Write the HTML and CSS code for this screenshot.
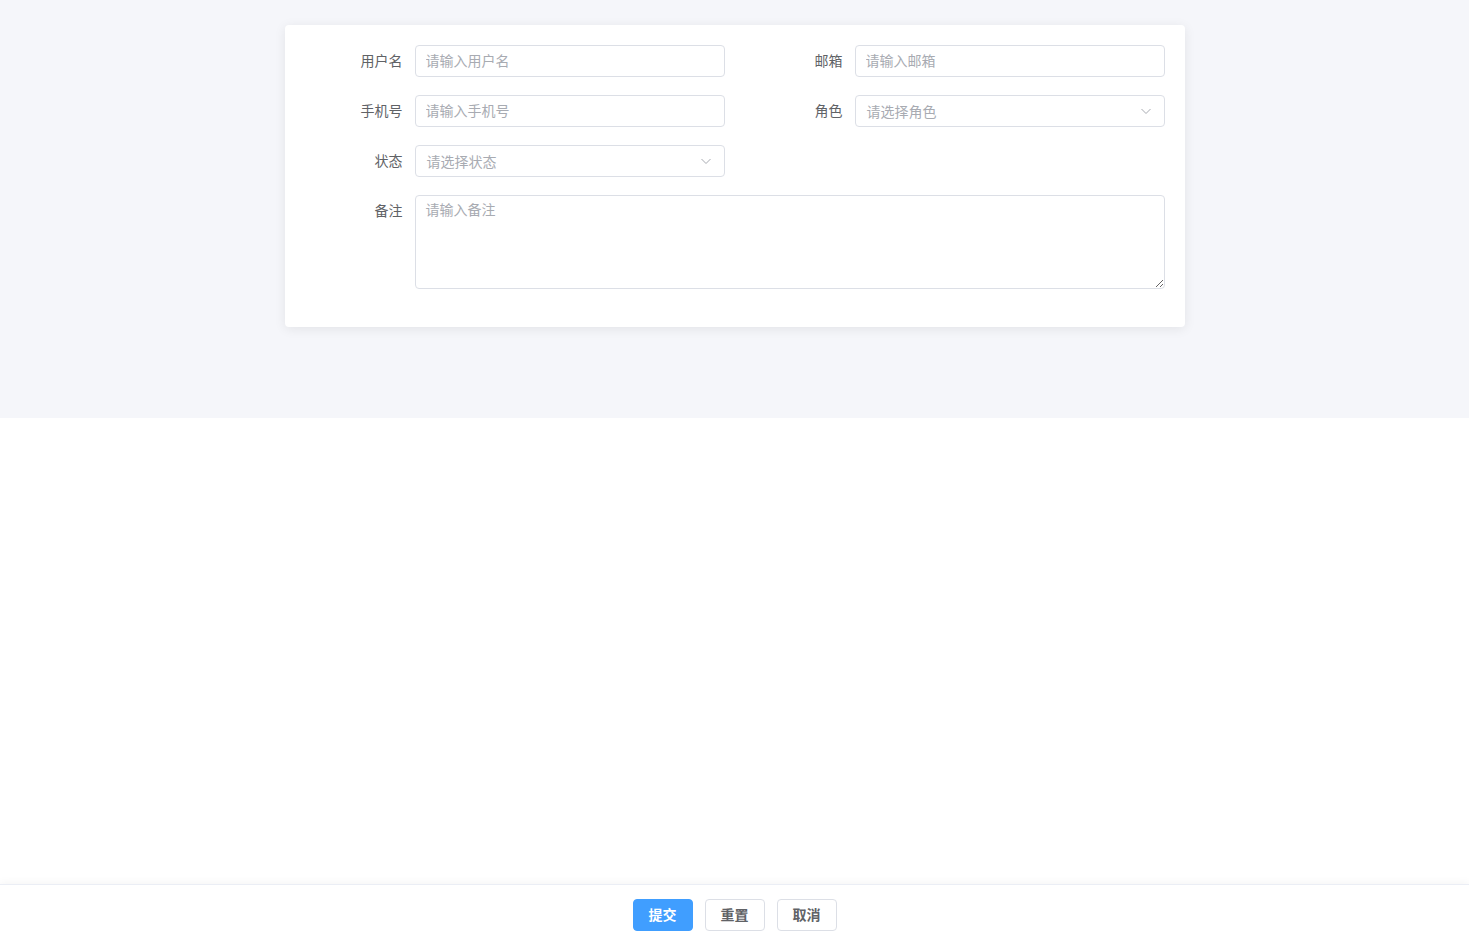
FILE: index.html
```html
<!DOCTYPE html>
<html lang="zh-CN">

<head>
    <meta charset="UTF-8">
    <meta name="viewport" content="width=device-width, initial-scale=1.0">
    <title>用户表单</title>
    <link rel="stylesheet" href="styles.css">
</head>

<body>
    <div class="page">
        <div class="main">
            <div class="card">
                <form class="form-grid">
                    <div class="form-item">
                        <label class="form-label">用户名</label>
                        <input class="form-input" type="text" placeholder="请输入用户名">
                    </div>
                    <div class="form-item">
                        <label class="form-label">邮箱</label>
                        <input class="form-input" type="text" placeholder="请输入邮箱">
                    </div>
                    <div class="form-item">
                        <label class="form-label">手机号</label>
                        <input class="form-input" type="text" placeholder="请输入手机号">
                    </div>
                    <div class="form-item">
                        <label class="form-label">角色</label>
                        <div class="form-select">
                            <span>请选择角色</span>
                            <svg width="12" height="12" viewBox="0 0 12 12"><path d="M1.5 4 6 8.5 10.5 4" fill="none" stroke="#a8abb2" stroke-width="1"/></svg>
                        </div>
                    </div>
                    <div class="form-item">
                        <label class="form-label">状态</label>
                        <div class="form-select">
                            <span>请选择状态</span>
                            <svg width="12" height="12" viewBox="0 0 12 12"><path d="M1.5 4 6 8.5 10.5 4" fill="none" stroke="#a8abb2" stroke-width="1"/></svg>
                        </div>
                    </div>
                    <div class="form-item"></div>
                    <div class="form-item full">
                        <label class="form-label">备注</label>
                        <textarea class="form-textarea" placeholder="请输入备注"></textarea>
                    </div>
                </form>
            </div>
        </div>
        <div class="spacer"></div>
        <div class="footer">
            <button class="btn primary">提交</button>
            <button class="btn">重置</button>
            <button class="btn">取消</button>
        </div>
    </div>
</body>

</html>
```

FILE: styles.css
```css
* {
    box-sizing: border-box;
}

body {
    margin: 0;
    font-family: "Noto Sans CJK SC", "Liberation Sans", sans-serif;
    font-size: 14px;
    color: #606266;
    background-color: white;
}

.page {
    height: 100vh;
    display: flex;
    flex-direction: column;
}

.main {
    height: 418px;
    background-color: #f5f6fa;
    padding-top: 25px;
    display: flex;
    justify-content: center;
    align-items: flex-start;
}

.card {
    width: 900px;
    background-color: white;
    border-radius: 4px;
    box-shadow: 0 2px 12px rgba(0, 0, 0, 0.08);
    padding: 20px;
}

.form-grid {
    display: grid;
    grid-template-columns: 420px 420px;
    column-gap: 20px;
    margin: 0;
}

.form-item {
    display: flex;
    align-items: flex-start;
    margin-bottom: 18px;
    min-height: 32px;
}

.form-item.full {
    grid-column: 1 / 3;
}

.form-label {
    width: 110px;
    flex-shrink: 0;
    text-align: right;
    padding-right: 12px;
    line-height: 30px;
    color: #606266;
}

.form-input,
.form-select,
.form-textarea {
    flex: 1;
    border: 1px solid #dcdfe6;
    border-radius: 4px;
    font-family: inherit;
    font-size: 14px;
    color: #606266;
    background-color: white;
}

.form-input {
    height: 32px;
    padding: 0 10px 2px 10px;
    outline: none;
}

.form-input::placeholder,
.form-textarea::placeholder {
    color: #a8abb2;
}

.form-select {
    height: 32px;
    padding: 0 12px 0 11px;
    display: flex;
    align-items: center;
    justify-content: space-between;
    color: #a8abb2;
}

.form-select span {
    margin-top: -1px;
}

.form-select svg {
    display: block;
}

.form-textarea {
    height: 94px;
    padding: 3px 10px;
    line-height: 1.5;
    resize: vertical;
    outline: none;
}

.spacer {
    flex: 1;
}

.footer {
    border-top: 1px solid #ebeef5;
    box-shadow: 0 -2px 8px rgba(0, 0, 0, 0.04);
    padding: 14px 0;
    display: flex;
    justify-content: center;
    gap: 12px;
}

.btn {
    width: 60px;
    height: 32px;
    padding: 0 0 2px 0;
    border: 1px solid #dcdfe6;
    border-radius: 4px;
    background-color: white;
    color: #606266;
    font-family: inherit;
    font-size: 14px;
    font-weight: bold;
    cursor: pointer;
}

.btn.primary {
    background-color: #409eff;
    border-color: #409eff;
    color: white;
}
```
